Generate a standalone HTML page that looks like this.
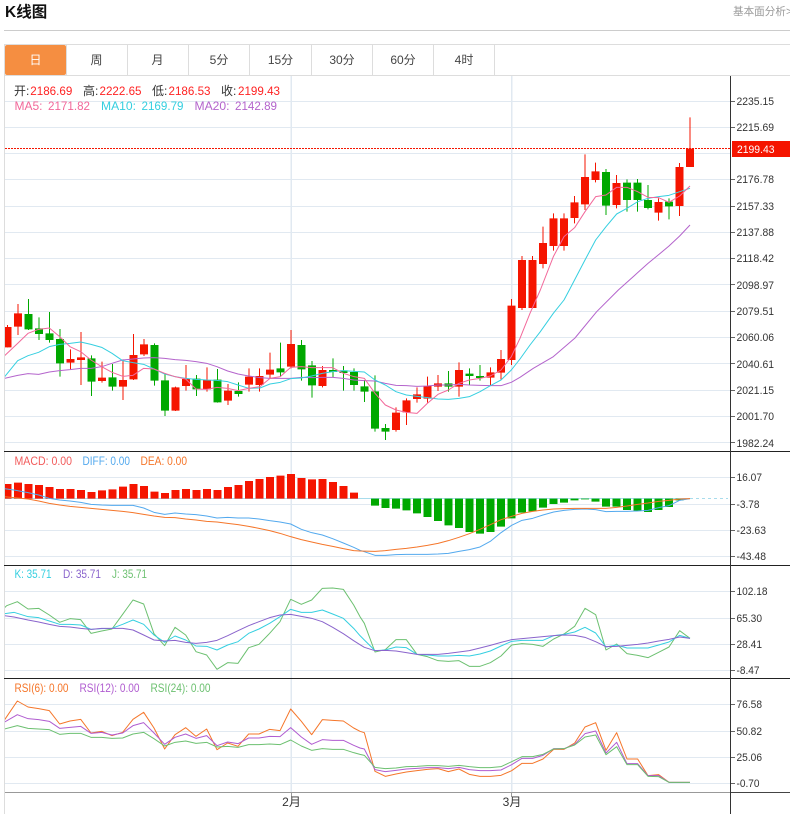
<!DOCTYPE html>
<html lang="zh-CN">
<head>
<meta charset="utf-8">
<title>K线图</title>
<style>
html,body{margin:0;padding:0;background:#fff;width:790px;height:814px;overflow:hidden}
svg{display:block}
text{font-family:"Liberation Sans","Noto Sans CJK SC",sans-serif;font-size:12px;fill:#333}
.ax text{fill:#333;font-size:11px}
.tab text{text-anchor:middle;fill:#444}
polyline{fill:none;stroke-width:3;stroke-linejoin:round}
.r{fill:#f22}
</style>
</head>
<body>
<svg width="790" height="814" viewBox="0 0 790 814" xmlns="http://www.w3.org/2000/svg">
<defs><clipPath id="c"><rect x="5" y="76" width="725" height="716"/></clipPath></defs>

<text x="5" y="17" style="font-size:15.5px;font-weight:bold;fill:#111">K线图</text>
<text x="733" y="15" style="fill:#999;font-size:10.6px">基本面分析&gt;</text>
<rect x="4" y="30" width="786" height="1" fill="#ccc"/>

<!-- tabs -->
<g fill="#ddd">
<rect x="4" y="44" width="786" height="1"/>
<rect x="4" y="75" width="786" height="1"/>
<rect x="4" y="44" width="1" height="32"/>
<rect x="66" y="44" width="1" height="31"/>
<rect x="127" y="44" width="1" height="31"/>
<rect x="188" y="44" width="1" height="31"/>
<rect x="249" y="44" width="1" height="31"/>
<rect x="311" y="44" width="1" height="31"/>
<rect x="372" y="44" width="1" height="31"/>
<rect x="433" y="44" width="1" height="31"/>
<rect x="494" y="44" width="1" height="31"/>
</g>
<rect x="5" y="45" width="61" height="30" rx="2" fill="#f58e41"/>
<g class="tab">
<text x="35.5" y="64" style="fill:#fff">日</text>
<text x="96.5" y="64">周</text>
<text x="157.5" y="64">月</text>
<text x="219" y="64">5分</text>
<text x="280.5" y="64">15分</text>
<text x="342" y="64">30分</text>
<text x="403" y="64">60分</text>
<text x="464" y="64">4时</text>
</g>

<!-- grid -->
<g fill="#e1e9f1">
<rect x="5" y="101" width="725" height="1"/><rect x="5" y="127" width="725" height="1"/><rect x="5" y="153" width="725" height="1"/><rect x="5" y="179" width="725" height="1"/><rect x="5" y="206" width="725" height="1"/><rect x="5" y="232" width="725" height="1"/><rect x="5" y="258" width="725" height="1"/><rect x="5" y="284" width="725" height="1"/><rect x="5" y="311" width="725" height="1"/><rect x="5" y="337" width="725" height="1"/><rect x="5" y="363" width="725" height="1"/><rect x="5" y="390" width="725" height="1"/><rect x="5" y="416" width="725" height="1"/><rect x="5" y="442" width="725" height="1"/>
<rect x="5" y="477" width="725" height="1"/><rect x="5" y="504" width="725" height="1"/><rect x="5" y="530" width="725" height="1"/><rect x="5" y="556" width="725" height="1"/>
<rect x="5" y="591" width="725" height="1"/><rect x="5" y="618" width="725" height="1"/><rect x="5" y="644" width="725" height="1"/><rect x="5" y="670" width="725" height="1"/>
<rect x="5" y="704" width="725" height="1"/><rect x="5" y="731" width="725" height="1"/><rect x="5" y="757" width="725" height="1"/><rect x="5" y="783" width="725" height="1"/>
<rect x="290.5" y="76" width="1.5" height="716"/>
<rect x="511" y="76" width="1.5" height="716"/>
</g>

<g clip-path="url(#c)">
<!-- candles lower-left -->
<g transform="translate(0 290) scale(1 .33333)" fill="none">
<path stroke="#f51500" stroke-width="1" d="M7.5 105V172M18 42V135M70.5 178V238M81 126V285M102 215V278M123 208V330M133.5 132V270M144 147V198M175.5 290V363M186 225V302M207 232V305M228 282V345M249 235V305M259.5 235V305M270 188V265M291 120V235M322.5 228V292M396 352V425M406.5 325V405M417 292V338M427.5 260V338M438 255V303M459 217V320M490.5 232V285M501 180V268M511.5 27V225"/>
<path stroke="#f51500" stroke-width="8" d="M7.5 111V172M18 70V110M70.5 207V218M81 202V210M102 263V273M123 270V290M133.5 195V268M144 163V193M175.5 292V362M186 267V288M207 270V298M228 302V332M249 260V284M259.5 258V285M270 239V254M291 162V230M322.5 240V288M396 368V420M406.5 331V367M417 313V327M427.5 288V326M438 280V290M459 240V290M490.5 247V263M501 207V248M511.5 47V210"/>
<path stroke="#00a800" stroke-width="1" d="M28.5 27V120M39 82V150M49.5 66V158M60 117V260M91.5 196V318M112.5 222V302M154.5 160V287M165 250V378M196.5 255V318M217.5 237V338M238.5 277V320M280.5 158V260M301.5 150V272M312 213V323M333 205V262M343.5 228V302M354 235V302M364.5 270V336M375 256V425M385.5 402V450M448.5 243V305M469.5 235V285M480 225V272"/>
<path stroke="#00a800" stroke-width="8" d="M28.5 72V118M39 115V132M49.5 130V150M60 147V220M91.5 205V275M112.5 262V290M154.5 165V272M165 271V362M196.5 266V298M217.5 269V337M238.5 303V312M280.5 235V247M301.5 165V238M312 226V286M333 240V246M343.5 241V249M354 246V285M364.5 289V305M375 304V416M385.5 414V425M448.5 280V290M469.5 251V258M480 258V264"/>
</g>
<!-- candles upper-right -->
<g transform="translate(0 90) scale(1 .33333)" fill="none">
<path stroke="#f51500" stroke-width="1" d="M522 498V660M532.5 498V655M543 410V535M553.5 370V482M564 370V482M574.5 318V400M585 193V360M595.5 218V277M616.5 255V355M658.5 325V392M679.5 219V378M690 82V176"/>
<path stroke="#f51500" stroke-width="8" d="M522 510V654M532.5 510V654M543 459V522M553.5 385V468M564 385V468M574.5 337V384M585 261V343M595.5 244V270M616.5 279V345M658.5 336V368M679.5 231V348M690 176V231"/>
<path stroke="#00a800" stroke-width="1" d="M606 237V375M627 268V365M637.5 267V365M648 285V358M669 325V388"/>
<path stroke="#00a800" stroke-width="8" d="M606 246V347M627 278V330M637.5 278V330M648 330V354M669 335V349"/>
</g>
<!-- MA lines -->
<g transform="translate(0 290) scale(.33333)">
<polyline stroke="#b464cc" points="14,265 53,256 84,251 116,253 148,246 179,242 210,239 242,235 273,235 305,230 336,220 368,210 399,207 431,204 462,203 494,205 525,209 557,211 588,215 620,220 651,230 683,243 714,252 746,258 780,263 810,265 841,265 872,265 904,262 935,263 967,262 998,262 1030,265 1062,270 1093,272 1125,273 1156,280 1188,286 1219,287 1251,289 1282,288 1314,285 1345,285 1377,283 1408,285 1440,286 1471,287 1503,287 1534,277 1560,262 1600,235 1660,200 1725,144 1790,65 1855,0 1913,-52 1944,-80 1976,-106 2007,-132 2039,-162 2070,-195"/>
<polyline stroke="#35cfe0" points="14,260 53,212 84,197 116,187 148,170 179,163 210,160 242,156 273,163 305,172 336,190 368,212 399,218 431,223 462,237 494,252 525,260 557,265 588,268 620,270 651,271 683,275 714,285 746,295 780,294 810,282 841,277 872,266 904,264 935,258 967,250 998,245 1030,242 1062,244 1093,246 1125,270 1156,285 1188,305 1219,315 1251,319 1282,323 1314,327 1345,328 1377,325 1408,320 1440,305 1471,287 1503,270 1534,240 1560,207 1590,165 1621,125 1660,70 1692,30 1708,0 1755,-90 1787,-150 1818,-190 1850,-228 1881,-245 1913,-265 1944,-275 1976,-280 2007,-284 2039,-295 2070,-305"/>
<polyline stroke="#f2689a" points="14,197 53,160 84,130 116,118 148,114 179,140 210,170 242,185 273,210 305,230 336,247 368,259 399,256 431,235 462,237 494,250 525,260 557,267 588,297 620,298 651,292 683,295 714,302 746,295 780,290 810,265 841,260 872,232 904,230 935,233 967,233 998,233 1030,250 1062,260 1093,265 1125,310 1156,345 1188,360 1219,367 1251,370 1282,340 1314,313 1345,300 1377,280 1408,270 1440,265 1471,258 1503,240 1534,200 1560,145 1590,70 1621,0 1660,-100 1692,-160 1724,-187 1755,-235 1787,-280 1818,-285 1850,-308 1881,-308 1913,-295 1944,-278 1976,-277 2007,-263 2039,-282 2070,-312"/>
</g>

<!-- MACD zero line -->
<rect x="5" y="498" width="685" height="1" fill="#a8dcec"/>
<path d="M690 498.5H728" stroke="#a8dcec" stroke-width="1" stroke-dasharray="3 3" fill="none"/>
<!-- MACD bars -->
<g transform="translate(0 450) scale(1 .33333)" fill="none" stroke-width="8">
<path stroke="#f51500" d="M7.5 102V146M18 98V146M28.5 102V146M39 105V146M49.5 111V146M60 117V146M70.5 117V146M81 120V146M91.5 126V146M102 121V146M112.5 118V146M123 110V146M133.5 102V146M144 108V146M154.5 125V146M165 129V146M175.5 120V146M186 117V146M196.5 120V146M207 117V146M217.5 120V146M228 111V146M238.5 105V146M249 93V146M259.5 87V146M270 81V146M280.5 77V146M291 72V146M301.5 84V146M312 88V146M322.5 87V146M333 96V146M343.5 108V146M354 128V146"/>
<path stroke="#00a800" d="M375 146V167M385.5 146V174M396 146V176M406.5 146V181M417 146V190M427.5 146V201M438 146V213M448.5 146V226M459 146V234M469.5 146V246M480 146V251M490.5 146V246M501 146V230M511.5 146V205M522 146V188M532.5 146V184M543 146V173M553.5 146V162M564 146V158M574.5 146V151M585 146V148M595.5 146V155M606 146V170M616.5 146V170M627 146V180M637.5 146V183M648 146V186M658.5 146V180M669 146V171M679.5 146V151"/>
</g>
<g transform="translate(0 450) scale(.33333)">
<polyline stroke="#53a9ee" points="14,116 42,120 84,128 116,135 148,145 179,150 210,153 242,157 273,163 305,165 336,166 368,166 399,166 431,174 462,187 494,193 525,189 557,192 588,194 620,198 651,204 683,202 714,204 746,204 777,207 809,212 840,216 872,222 904,238 935,248 967,255 998,266 1030,279 1061,292 1080,301 1093,305 1125,316 1156,316 1188,314 1219,313 1251,313 1282,313 1314,312 1345,310 1377,304 1408,299 1440,291 1471,274 1503,248 1535,226 1566,211 1598,205 1629,195 1661,186 1692,181 1724,178 1755,177 1787,179 1818,185 1850,184 1881,184 1913,183 1944,181 1976,173 2007,167 2039,151 2070,146"/>
<polyline stroke="#f5762a" points="14,140 42,143 84,147 116,153 148,160 179,165 210,169 242,172 273,175 305,178 336,181 368,184 399,188 431,193 462,198 494,202 525,203 557,207 588,210 620,214 651,216 683,220 714,224 746,229 777,235 809,242 840,250 872,260 904,269 935,276 967,283 998,289 1030,296 1061,302 1080,303 1125,304 1156,302 1188,298 1219,295 1251,291 1282,286 1314,280 1345,272 1377,262 1408,251 1440,238 1471,224 1503,209 1535,199 1566,190 1598,184 1629,180 1661,177 1692,176 1724,175 1755,175 1787,175 1818,175 1850,172 1881,168 1913,163 1944,159 1976,154 2007,151 2039,147 2070,146"/>
</g>

<!-- KDJ -->
<g transform="translate(0 565) scale(.33333)">
<polyline stroke="#6cc070" points="14,128 20,122 52,110 84,132 116,130 148,150 179,172 210,161 242,164 273,205 305,198 336,192 368,148 399,105 431,117 462,206 494,242 525,187 557,210 588,260 620,270 651,313 683,293 714,295 746,248 777,238 809,205 840,170 872,103 904,118 935,105 967,70 998,69 1030,73 1061,120 1080,155 1093,175 1125,261 1156,254 1188,224 1219,224 1251,268 1282,275 1314,287 1345,289 1377,287 1408,304 1440,304 1471,293 1503,273 1535,240 1566,236 1598,238 1629,244 1661,222 1692,207 1724,184 1755,130 1787,149 1818,255 1850,237 1881,266 1913,271 1944,278 1976,262 2007,246 2039,197 2070,220"/>
<polyline stroke="#35cfe0" points="14,146 42,142 84,155 116,158 148,168 179,178 210,178 242,180 273,193 305,191 336,190 368,178 399,165 431,178 462,210 494,232 525,213 557,225 588,243 620,244 651,255 683,240 714,230 746,205 777,192 809,175 840,155 872,133 904,142 935,142 967,135 998,147 1030,160 1061,190 1080,212 1093,225 1125,257 1156,255 1188,246 1219,248 1251,268 1282,270 1314,273 1345,273 1377,271 1408,273 1440,267 1471,258 1503,243 1535,229 1566,226 1598,226 1629,226 1661,212 1692,208 1724,201 1755,187 1787,204 1818,246 1850,240 1881,249 1913,249 1944,249 1976,240 2007,231 2039,211 2070,220"/>
<polyline stroke="#8a64cc" points="14,152 42,156 84,165 116,171 148,178 179,184 210,186 242,190 273,193 305,190 336,190 368,190 399,195 431,210 462,225 494,228 525,226 557,232 588,235 620,232 651,226 683,212 714,197 746,182 777,170 809,158 840,150 872,148 904,154 935,160 967,170 998,187 1030,206 1061,227 1080,239 1093,247 1125,257 1156,256 1188,258 1219,263 1251,268 1282,268 1314,268 1345,265 1377,261 1408,257 1440,249 1471,241 1503,232 1535,224 1566,221 1598,218 1629,215 1661,212 1692,210 1724,211 1755,217 1787,230 1818,245 1850,244 1881,241 1913,238 1944,234 1976,228 2007,223 2039,216 2070,220"/>
</g>

<!-- RSI -->
<g transform="translate(0 678) scale(.33333)">
<polyline stroke="#f5762a" points="14,125 52,69 84,87 116,92 148,98 179,138 210,129 242,124 273,165 305,160 336,173 368,163 399,124 431,103 462,150 494,213 525,170 557,149 588,175 620,153 651,215 683,195 714,205 746,168 777,168 809,154 840,158 872,93 904,130 935,170 967,125 998,127 1030,129 1061,150 1080,160 1093,164 1125,280 1156,295 1188,288 1219,282 1251,278 1282,274 1314,272 1345,281 1377,273 1408,289 1440,295 1471,295 1503,292 1535,278 1566,256 1598,256 1629,243 1661,214 1692,214 1724,195 1755,147 1787,134 1818,217 1850,164 1881,243 1913,243 1944,293 1976,290 2007,313 2039,313 2070,313"/>
<polyline stroke="#b05cd0" points="14,132 52,110 84,122 116,125 148,130 179,151 210,148 242,145 273,166 305,163 336,171 368,165 399,143 431,134 462,165 494,199 525,178 557,168 588,181 620,173 651,203 683,192 714,197 746,180 777,180 809,175 840,176 872,149 904,177 935,199 967,185 998,187 1030,187 1061,202 1080,210 1093,213 1125,275 1156,281 1188,277 1219,273 1251,271 1282,269 1314,269 1345,272 1377,268 1408,275 1440,278 1471,278 1503,276 1535,260 1566,241 1598,241 1629,232 1661,212 1692,212 1724,199 1755,167 1787,159 1818,225 1850,193 1881,257 1913,257 1944,293 1976,293 2007,313 2039,313 2070,313"/>
<polyline stroke="#6cc070" points="14,153 52,143 84,151 116,153 148,155 179,169 210,166 242,166 273,178 305,178 336,181 368,180 399,168 431,163 462,182 494,204 525,193 557,189 588,196 620,193 651,207 683,205 714,208 746,200 777,200 809,198 840,200 872,186 904,204 935,217 967,212 998,214 1030,214 1061,224 1080,229 1093,232 1125,268 1156,272 1188,270 1219,266 1251,265 1282,263 1314,263 1345,265 1377,262 1408,266 1440,269 1471,269 1503,266 1535,251 1566,236 1598,236 1629,229 1661,213 1692,212 1724,201 1755,177 1787,171 1818,230 1850,206 1881,260 1913,260 1944,295 1976,296 2007,313 2039,313 2070,313"/>
</g>
</g>

<!-- price dotted line -->
<path d="M5 148.5H730" stroke="#f51500" stroke-width="1" stroke-dasharray="2 1" fill="none"/>

<!-- frame lines -->
<rect x="4" y="75" width="1" height="739" fill="#ddd"/>
<rect x="4" y="451" width="786" height="1" fill="#222"/>
<rect x="4" y="565" width="786" height="1" fill="#222"/>
<rect x="4" y="678" width="786" height="1" fill="#222"/>
<rect x="5" y="792" width="725" height="1" fill="#999"/>
<rect x="730" y="792" width="60" height="1" fill="#444"/>
<rect x="730" y="76" width="1" height="738" fill="#333"/>
<g fill="#999">
<rect x="291" y="793" width="1" height="4"/>
<rect x="511" y="793" width="1" height="4"/>
</g>

<!-- ticks -->
<g fill="#666">
<rect x="731" y="101" width="4" height="1"/><rect x="731" y="127" width="4" height="1"/><rect x="731" y="179" width="4" height="1"/><rect x="731" y="206" width="4" height="1"/><rect x="731" y="232" width="4" height="1"/><rect x="731" y="258" width="4" height="1"/><rect x="731" y="284" width="4" height="1"/><rect x="731" y="311" width="4" height="1"/><rect x="731" y="337" width="4" height="1"/><rect x="731" y="363" width="4" height="1"/><rect x="731" y="390" width="4" height="1"/><rect x="731" y="416" width="4" height="1"/><rect x="731" y="442" width="4" height="1"/>
<rect x="731" y="477" width="4" height="1"/><rect x="731" y="504" width="4" height="1"/><rect x="731" y="530" width="4" height="1"/><rect x="731" y="556" width="4" height="1"/>
<rect x="731" y="591" width="4" height="1"/><rect x="731" y="618" width="4" height="1"/><rect x="731" y="644" width="4" height="1"/><rect x="731" y="670" width="4" height="1"/>
<rect x="731" y="704" width="4" height="1"/><rect x="731" y="731" width="4" height="1"/><rect x="731" y="757" width="4" height="1"/><rect x="731" y="783" width="4" height="1"/>
</g>

<!-- axis labels -->
<g class="ax">
<text x="736.5" y="105" textLength="37.5" lengthAdjust="spacingAndGlyphs">2235.15</text>
<text x="736.5" y="131" textLength="37.5" lengthAdjust="spacingAndGlyphs">2215.69</text>
<text x="736.5" y="183" textLength="37.5" lengthAdjust="spacingAndGlyphs">2176.78</text>
<text x="736.5" y="210" textLength="37.5" lengthAdjust="spacingAndGlyphs">2157.33</text>
<text x="736.5" y="236" textLength="37.5" lengthAdjust="spacingAndGlyphs">2137.88</text>
<text x="736.5" y="262" textLength="37.5" lengthAdjust="spacingAndGlyphs">2118.42</text>
<text x="736.5" y="289" textLength="37.5" lengthAdjust="spacingAndGlyphs">2098.97</text>
<text x="736.5" y="315" textLength="37.5" lengthAdjust="spacingAndGlyphs">2079.51</text>
<text x="736.5" y="341" textLength="37.5" lengthAdjust="spacingAndGlyphs">2060.06</text>
<text x="736.5" y="368" textLength="37.5" lengthAdjust="spacingAndGlyphs">2040.61</text>
<text x="736.5" y="394" textLength="37.5" lengthAdjust="spacingAndGlyphs">2021.15</text>
<text x="736.5" y="420" textLength="37.5" lengthAdjust="spacingAndGlyphs">2001.70</text>
<text x="736.5" y="447" textLength="37.5" lengthAdjust="spacingAndGlyphs">1982.24</text>
<text x="736.5" y="481" textLength="25.5" lengthAdjust="spacingAndGlyphs">16.07</text>
<text x="736.5" y="508" textLength="23" lengthAdjust="spacingAndGlyphs">-3.78</text>
<text x="736.5" y="534" textLength="29.5" lengthAdjust="spacingAndGlyphs">-23.63</text>
<text x="736.5" y="560" textLength="29.5" lengthAdjust="spacingAndGlyphs">-43.48</text>
<text x="736.5" y="595" textLength="31" lengthAdjust="spacingAndGlyphs">102.18</text>
<text x="736.5" y="622" textLength="25.5" lengthAdjust="spacingAndGlyphs">65.30</text>
<text x="736.5" y="648" textLength="25.5" lengthAdjust="spacingAndGlyphs">28.41</text>
<text x="736.5" y="674" textLength="23" lengthAdjust="spacingAndGlyphs">-8.47</text>
<text x="736.5" y="708" textLength="25.5" lengthAdjust="spacingAndGlyphs">76.58</text>
<text x="736.5" y="735" textLength="25.5" lengthAdjust="spacingAndGlyphs">50.82</text>
<text x="736.5" y="761" textLength="25.5" lengthAdjust="spacingAndGlyphs">25.06</text>
<text x="736.5" y="787" textLength="23" lengthAdjust="spacingAndGlyphs">-0.70</text>
</g>
<rect x="732" y="141" width="58" height="16" fill="#f51500"/>
<text x="737" y="153" textLength="37.5" lengthAdjust="spacingAndGlyphs" style="fill:#fff;font-size:11px">2199.43</text>

<text x="291.5" y="806" style="text-anchor:middle">2月</text>
<text x="512" y="806" style="text-anchor:middle">3月</text>

<!-- legends -->
<text x="14" y="95">开:</text><text x="30.3" y="95" class="r" textLength="42" lengthAdjust="spacingAndGlyphs">2186.69</text>
<text x="83" y="95">高:</text><text x="99.5" y="95" class="r" textLength="42" lengthAdjust="spacingAndGlyphs">2222.65</text>
<text x="152" y="95">低:</text><text x="168.5" y="95" class="r" textLength="42" lengthAdjust="spacingAndGlyphs">2186.53</text>
<text x="221" y="95">收:</text><text x="238" y="95" class="r" textLength="42" lengthAdjust="spacingAndGlyphs">2199.43</text>

<text x="14.5" y="110" style="fill:#f2689a" textLength="28" lengthAdjust="spacingAndGlyphs">MA5:</text><text x="48" y="110" style="fill:#f2689a" textLength="42" lengthAdjust="spacingAndGlyphs">2171.82</text>
<text x="101" y="110" style="fill:#35cfe0" textLength="35" lengthAdjust="spacingAndGlyphs">MA10:</text><text x="141.5" y="110" style="fill:#35cfe0" textLength="42" lengthAdjust="spacingAndGlyphs">2169.79</text>
<text x="194.5" y="110" style="fill:#b464cc" textLength="35" lengthAdjust="spacingAndGlyphs">MA20:</text><text x="235" y="110" style="fill:#b464cc" textLength="42" lengthAdjust="spacingAndGlyphs">2142.89</text>

<text x="14.5" y="465" style="fill:#f25c5c" textLength="57.5" lengthAdjust="spacingAndGlyphs">MACD: 0.00</text>
<text x="82.5" y="465" style="fill:#53a9ee" textLength="47.5" lengthAdjust="spacingAndGlyphs">DIFF: 0.00</text>
<text x="140.5" y="465" style="fill:#f5762a" textLength="46.5" lengthAdjust="spacingAndGlyphs">DEA: 0.00</text>

<text x="14.5" y="578" style="fill:#35cfe0" textLength="37" lengthAdjust="spacingAndGlyphs">K: 35.71</text>
<text x="63" y="578" style="fill:#8a64cc" textLength="38" lengthAdjust="spacingAndGlyphs">D: 35.71</text>
<text x="112" y="578" style="fill:#6cc070" textLength="35" lengthAdjust="spacingAndGlyphs">J: 35.71</text>

<text x="14.5" y="692" style="fill:#f5762a" textLength="54" lengthAdjust="spacingAndGlyphs">RSI(6): 0.00</text>
<text x="79.5" y="692" style="fill:#b05cd0" textLength="60" lengthAdjust="spacingAndGlyphs">RSI(12): 0.00</text>
<text x="150.5" y="692" style="fill:#6cc070" textLength="60" lengthAdjust="spacingAndGlyphs">RSI(24): 0.00</text>
</svg>
</body>
</html>
